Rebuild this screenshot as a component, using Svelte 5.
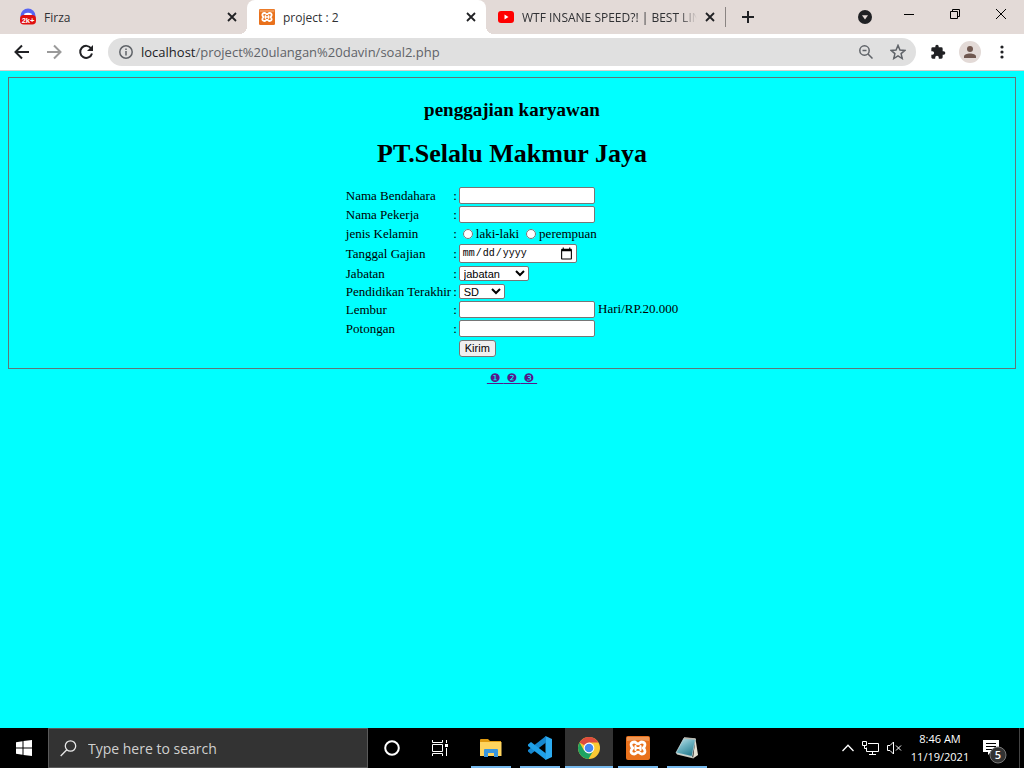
<script>
  let gender = $state('');
  const marks = ['❶', '❷', '❸'];
</script>

{#snippet cross()}
  <svg width="10" height="10" viewBox="0 0 10 10"><path d="M1 1l8 8M9 1l-8 8" stroke="#202124" stroke-width="1.8" /></svg>
{/snippet}

{#snippet xampp(size)}
  <svg width={size} height={size} viewBox="0 0 24 24">
    <rect width="24" height="24" rx="2" fill="#e9711c" />
    <path d="M1 1h22v4q-11-2-22 0z" fill="#f7b27c" opacity=".6" />
    <path d="M8.200 6c-2.600 0-3.600 1.800-3 3.600.3 1 .8 1.600 1.500 2.400-.7.8-1.200 1.400-1.500 2.400-.6 1.800.4 3.600 3 3.600 2 0 2-1.800 3.800-1.800s1.800 1.800 3.800 1.800c2.600 0 3.600-1.800 3-3.600-.3-1-.8-1.600-1.500-2.400.7-.8 1.200-1.400 1.500-2.400.6-1.800-.4-3.600-3-3.600-2 0-2 1.800-3.800 1.800s-1.800-1.800-3.800-1.800z" fill="#e9711c" stroke="#fff" stroke-width="2.800" />
    <path d="M9.500 10v4M14.500 10v4M9.500 12h5" stroke="#fff" stroke-width="2.200" stroke-linecap="round" />
  </svg>
{/snippet}

<div class="screen">
  <header class="tabs">
    <div class="tab first">
      <svg class="fav" width="16" height="18" viewBox="0 0 17 18">
        <circle cx="8.500" cy="8" r="8" fill="#5865f2" />
        <path d="M4.500 5.500q4-2 8 0v3h-8z" fill="#fff" />
        <rect x="0" y="7" width="17" height="10" rx="4" fill="#e01010" />
        <text x="8.500" y="15" text-anchor="middle" font-family="Liberation Sans, sans-serif" font-size="8" font-weight="700" fill="#fff">2k+</text>
      </svg>
      <span class="title">Firza</span>
      <button aria-label="Close Firza">{@render cross()}</button>
    </div>
    <div class="tab active">
      <span class="fav">{@render xampp(16)}</span>
      <span class="title">project : 2</span>
      <button aria-label="Close project">{@render cross()}</button>
    </div>
    <div class="tab">
      <svg class="fav" width="16" height="12" viewBox="0 0 16 12"><rect width="16" height="12" rx="3" fill="#f00" /><path d="M6.500 3.500v5l4-2.500z" fill="#fff" /></svg>
      <span class="title faded">WTF INSANE SPEED?! | BEST LING</span>
      <button aria-label="Close video">{@render cross()}</button>
    </div>
    <span class="divider"></span>
    <button class="plus" aria-label="New tab"><svg width="12" height="12" viewBox="0 0 12 12"><path d="M6 0v12M0 6h12" stroke="#202124" stroke-width="2" /></svg></button>
    <button class="down" aria-label="Search tabs"><svg width="14" height="14" viewBox="0 0 14 14"><circle cx="7" cy="7" r="7" fill="#202124" /><path d="M4 5.200h6L7 9.500z" fill="#e3dad7" /></svg></button>
    <div class="window">
      <button aria-label="Minimize"><svg width="12" height="12" viewBox="0 0 12 12"><path d="M1 6.500h10" stroke="#000" /></svg></button>
      <button aria-label="Restore"><svg width="12" height="12" viewBox="0 0 12 12" fill="none" stroke="#000"><path d="M1.500 3.500h7v7h-7zM3.500 3.500v-2h7v7h-2" /></svg></button>
      <button aria-label="Close"><svg width="12" height="12" viewBox="0 0 12 12"><path d="M1 1l10 10M11 1L1 11" stroke="#000" /></svg></button>
    </div>
  </header>

  <nav class="toolbar">
    <button aria-label="Back"><svg width="16" height="16" viewBox="0 0 16 16" fill="none" stroke="#202124" stroke-width="2"><path d="M15 8H2M8 1.500L1.500 8 8 14.500" /></svg></button>
    <button aria-label="Forward"><svg width="16" height="16" viewBox="0 0 16 16" fill="none" stroke="#9a9a9a" stroke-width="2"><path d="M1 8h13M8 1.500L14.500 8 8 14.500" /></svg></button>
    <button aria-label="Reload"><svg width="16" height="16" viewBox="0 0 16 16"><path d="M13.200 4.500A6 6 0 1 0 14 9.500" fill="none" stroke="#202124" stroke-width="2" /><path d="M15 1v6H9z" fill="#202124" /></svg></button>
    <div class="address">
      <svg width="14" height="14" viewBox="0 0 14 14" fill="none" stroke="#5f6368" stroke-width="1.500"><circle cx="7" cy="7" r="6.200" /><path d="M7 6v4.500M7 3.500v1.600" /></svg>
      <span class="url"><b>localhost</b>/project%20ulangan%20davin/soal2.php</span>
      <button aria-label="Zoom"><svg width="14" height="14" viewBox="0 0 14 14" fill="none" stroke="#5f6368" stroke-width="1.500"><circle cx="5.500" cy="5.500" r="4.700" /><path d="M9 9l4.500 4.500M3.500 5.500h4" /></svg></button>
      <button aria-label="Bookmark"><svg width="16" height="16" viewBox="0 0 14 14" fill="none" stroke="#5f6368" stroke-width="1.300"><path d="M7 1.200l1.700 4 4.300.4-3.300 2.800 1 4.300L7 10.400l-3.700 2.300 1-4.300L1 5.600l4.300-.4z" /></svg></button>
    </div>
    <button aria-label="Extensions"><svg width="16" height="16" viewBox="0 0 24 24" fill="#202124"><path d="M20.500 11H19V7a2 2 0 0 0-2-2h-4V3.500a2.500 2.500 0 0 0-5 0V5H4a2 2 0 0 0-2 2v3.800h1.500a2.700 2.700 0 0 1 0 5.400H2V20c0 1.100.9 2 2 2h3.800v-1.500a2.700 2.700 0 0 1 5.400 0V22H17a2 2 0 0 0 2-2v-4h1.500a2.500 2.500 0 0 0 0-5z" /></svg></button>
    <button aria-label="Profile"><svg width="22" height="22" viewBox="0 0 22 22"><circle cx="11" cy="11" r="11" fill="#e3dad7" /><circle cx="11" cy="8" r="3" fill="#705850" /><path d="M5 17v-1.500C5 13.500 8 12.500 11 12.500s6 1 6 3V17z" fill="#705850" /></svg></button>
    <button aria-label="Menu"><svg width="4" height="14" viewBox="0 0 4 14" fill="#202124"><circle cx="2" cy="2" r="1.600" /><circle cx="2" cy="7" r="1.600" /><circle cx="2" cy="12" r="1.600" /></svg></button>
  </nav>

  <main>
    <form onsubmit={(e) => e.preventDefault()}>
      <h3>penggajian karyawan</h3>
      <h1>PT.Selalu Makmur Jaya</h1>
      <table>
        <tbody>
          <tr class="lead"><td><label for="bendahara">Nama Bendahara</label></td><td>:</td><td><input id="bendahara" type="text" /></td></tr>
          <tr><td><label for="pekerja">Nama Pekerja</label></td><td>:</td><td><input id="pekerja" type="text" /></td></tr>
          <tr>
            <td>jenis Kelamin</td><td>:</td>
            <td><div class="radios">
              <label><input type="radio" name="gender" value="laki-laki" bind:group={gender} />laki-laki</label>
              <label><input type="radio" name="gender" value="perempuan" bind:group={gender} />perempuan</label>
            </div></td>
          </tr>
          <tr class="tall"><td><label for="tanggal">Tanggal Gajian</label></td><td>:</td><td><input id="tanggal" type="date" /></td></tr>
          <tr class="short"><td><label for="jabatan">Jabatan</label></td><td>:</td><td><select id="jabatan" class="wide"><option>jabatan</option></select></td></tr>
          <tr class="short"><td><label for="pendidikan">Pendidikan Terakhir</label></td><td>:</td><td><select id="pendidikan"><option>SD</option></select></td></tr>
          <tr><td><label for="lembur">Lembur</label></td><td>:</td><td><input id="lembur" type="text" /> Hari/RP.20.000</td></tr>
          <tr><td><label for="potongan">Potongan</label></td><td>:</td><td><input id="potongan" type="text" /></td></tr>
          <tr class="tall"><td></td><td></td><td><button class="send">Kirim</button></td></tr>
        </tbody>
      </table>
    </form>
    <div class="pages">
      {#each marks as mark, i}<a href={'#soal' + (i + 1)}>&nbsp;{mark}&nbsp;</a>{/each}
    </div>
  </main>

  <footer>
    <button class="cell" aria-label="Start"><svg width="16" height="16" viewBox="0 0 16 16" fill="#fff"><path d="M0 2.200L6.500 1.300v6.200H0zM7.500 1.100L16 0v7.500H7.500zM0 8.500h6.500v6.200L0 13.800zM7.500 8.500H16V16l-8.500-1.100z" /></svg></button>
    <label class="search">
      <svg width="17" height="17" viewBox="0 0 17 17" fill="none" stroke="#e8e8e8" stroke-width="1.300"><circle cx="10.500" cy="6" r="5.200" /><path d="M6.800 9.700L.7 16" /></svg>
      <input type="text" placeholder="Type here to search" aria-label="Type here to search" />
    </label>
    <button class="cell" aria-label="Cortana"><svg width="16" height="16" viewBox="0 0 16 16"><circle cx="8" cy="8" r="6.800" fill="none" stroke="#fff" stroke-width="2" /></svg></button>
    <button class="cell" aria-label="Task view"><svg width="16" height="16" viewBox="0 0 16 16" fill="none" stroke="#fff"><path d="M.5 0v2.500h10V0M.5 16v-2.500h10V16M.5 4.500h10v7H.5zM14.500 0v3M14.500 8v8" /><path d="M13 4h3v3h-3z" fill="#fff" stroke="none" /></svg></button>
    <div class="apps">
      <button class="cell app" aria-label="File Explorer"><svg width="22" height="18" viewBox="0 0 22 18"><path d="M0 1q0-1 1-1h7l2 2h11v15H0z" fill="#e09a10" /><path d="M0 3h21.500v14H0z" fill="#ffd45e" /><path d="M4 18v-7q0-1 1-1h12q1 0 1 1v7h-4v-4H8v4z" fill="#3a96dd" /></svg></button>
      <button class="cell app" aria-label="Visual Studio Code"><svg width="24" height="24" viewBox="0 0 24 24"><path d="M17.500 0L24 3v18l-6.500 3z" fill="#2cabf1" /><path d="M18 0v6.500L3 18l-3-2.500V14z" fill="#1687cf" /><path d="M18 24v-6.500L3 6 0 8.500V10z" fill="#1fa0e8" /></svg></button>
      <button class="cell app current" aria-label="Chrome"><svg width="24" height="24" viewBox="0 0 24 24"><circle cx="12" cy="12" r="11" fill="#fbc934" /><path d="M12 12L2.500 6.500A11 11 0 0 1 21.500 6.500H12z" fill="#dd4b3e" /><path d="M2.500 6.500A11 11 0 0 0 11.500 23L16.500 14.500 12 12 7 14.500z" fill="#1da362" /><circle cx="12" cy="12" r="5.400" fill="#fff" /><circle cx="12" cy="12" r="4.300" fill="#4587f3" /></svg></button>
      <button class="cell app" aria-label="XAMPP">{@render xampp(24)}</button>
      <button class="cell app" aria-label="Notepad">
        <svg width="24" height="24" viewBox="0 0 24 24">
          <defs><linearGradient id="pad" x1="0" y1="0" x2=".6" y2="1"><stop offset="0" stop-color="#cfeaee" /><stop offset=".5" stop-color="#6fb4c2" /><stop offset="1" stop-color="#2b7f92" /></linearGradient></defs>
          <path d="M20.500 3L23 19l-5 3.500z" fill="#e4e0d2" />
          <path d="M1 16.500L17 20l1.500 2.500L2 18.500z" fill="#c9c9bf" />
          <path d="M9 2l11.500 1-3.500 17.500L1 16.800z" fill="url(#pad)" stroke="#d9e6e6" stroke-width=".7" />
          <path d="M9 2l11.500 1" stroke="#b9b9b0" stroke-width="1.600" />
        </svg>
      </button>
    </div>
    <div class="tray">
      <svg width="12" height="8" viewBox="0 0 12 8" fill="none" stroke="#fff" stroke-width="1.300"><path d="M.5 7L6 1.200 11.500 7" /></svg>
      <svg width="17" height="14" viewBox="0 0 17 14" fill="none" stroke="#fff"><path d="M6 2.500h10.500v8H4.500V6.500M.5.500h4v4h-4zM2.500 4.500v3H5M10.500 10.500v3M7 13.500h7" /></svg>
      <svg width="15" height="14" viewBox="0 0 15 14" fill="none" stroke="#fff"><path d="M.5 4.500H3L6.500 1v12L3 9.500H.5zM9 4.500l5 5M14 4.500l-5 5" /></svg>
      <div class="clock"><span>8:46 AM</span><span>11/19/2021</span></div>
      <svg class="note" width="26" height="26" viewBox="0 0 26 26"><path d="M1 2h16v12H9l-3 3v-3H1z" fill="#fff" /><path d="M4 5.500h10M4 8.500h10M4 11.500h6" stroke="#000" /><circle cx="16" cy="17" r="8" fill="#333" stroke="#777" /><text x="16" y="21" text-anchor="middle" font-family="Open Sans, sans-serif" font-size="11" font-weight="600" fill="#fff">5</text></svg>
    </div>
  </footer>
</div>

<style>
  .screen { min-height: 100vh; display: flex; flex-direction: column; font-family: "Open Sans", "Noto Sans", sans-serif; }
  button { font: inherit; }
  svg { display: block; flex: none; }
  .tabs button, .toolbar button, .cell { border: 0; background: none; padding: 0; display: flex; align-items: center; justify-content: center; }

  .tabs { height: 34px; background: #e3dad7; display: flex; align-items: center; padding-left: 8px; }
  .tab { flex: 0 1 239px; box-sizing: border-box; min-width: 0; height: 34px; display: flex; align-items: center; padding: 0 10px 0 12px; gap: 8px; font-size: 12px; color: #303134; }
  .tab.active { position: relative; background: #fff; border-radius: 8px 8px 0 0; }
  .tab.active::before, .tab.active::after { content: ""; position: absolute; bottom: 0; width: 8px; height: 8px; }
  .tab.active::before { left: -8px; background: radial-gradient(circle at 0 0, transparent 8px, #fff 8px); }
  .tab.active::after { right: -8px; background: radial-gradient(circle at 100% 0, transparent 8px, #fff 8px); }
  .title { flex: 1; white-space: nowrap; overflow: hidden; }
  .faded { mask-image: linear-gradient(to right, #000 90%, transparent); }
  .divider { width: 1px; height: 20px; background: #8a8482; }
  .tabs .plus { margin-left: 16px; }
  .tabs .down { margin-left: auto; }
  .window { display: flex; margin-left: 14px; padding-bottom: 6px; }
  .window button { width: 46px; height: 28px; }

  .toolbar { height: 36px; background: #fff; border-bottom: 1px solid #d5cfcd; display: flex; align-items: center; padding: 0 6px; }
  .toolbar > button { width: 32px; height: 28px; }
  .address { flex: 1; height: 28px; margin: 0 6px; padding: 0 6px 0 11px; border-radius: 14px; background: #e0e0e0; display: flex; align-items: center; gap: 8px; color: #5f6368; font-size: 13px; }
  .address button { width: 24px; height: 24px; }
  .url { flex: 1; white-space: nowrap; overflow: hidden; }
  .url b { font-weight: 400; color: #202124; }

  main { flex: 1; background: #0ff; padding: 6px 8px; font-family: "Liberation Serif", serif; font-size: 13px; line-height: 15px; color: #000; }
  form { border: 1px solid #5f7878; padding: 0 0 9px; display: flex; flex-direction: column; align-items: center; }
  h3 { margin: 21px 0 0; font-size: 19px; line-height: 22px; }
  h1 { margin: 18px 0 16px; font-size: 26px; line-height: 30px; }
  table { border-collapse: collapse; margin-left: 2px; }
  tr { height: 19px; }
  tr.lead { height: 20px; }
  tr.tall { height: 21px; }
  tr.short { height: 18px; }
  td { padding: 0 2px 0 0; vertical-align: middle; white-space: nowrap; }
  td input, td select, td .send { display: inline-block; box-sizing: border-box; margin: 0; vertical-align: middle; border: 1px solid #767676; border-radius: 2px; background: #fff; font: 11px "Liberation Sans", sans-serif; color: #000; }
  td input[type="text"] { width: 136px; height: 17px; padding: 1px; }
  td input[type="date"] { width: 118px; height: 19px; padding: 0 3px 0 2px; font: 10px "Liberation Mono", monospace; }
  td input::-webkit-calendar-picker-indicator { width: 13px; height: 13px; padding: 0; background-size: 13px 13px; }
  td select { width: 46px; height: 15px; padding: 0; }
  td select.wide { width: 70px; }
  td .send { width: 37px; height: 17px; padding: 0; background: #efefef; line-height: 15px; border-radius: 3px; }
  .radios { display: flex; gap: 7px; padding-left: 4px; }
  .radios label { display: flex; align-items: center; gap: 3px; }
  .radios input { width: 10px; height: 10px; }
  .pages { text-align: center; line-height: 18px; }
  .pages a { color: #551a8b; font-size: 12px; font-family: "Liberation Serif", "DejaVu Sans", serif; }

  footer { height: 40px; background: #000; color: #fff; display: flex; align-items: center; }
  .cell { width: 48px; height: 40px; box-sizing: border-box; flex: none; }
  .search { flex: 0 1 320px; box-sizing: border-box; min-width: 0; height: 40px; background: #333; border: 1px solid #5a5a5a; display: flex; align-items: center; gap: 11px; padding: 0 11px; }
  .search input { flex: 1; min-width: 0; border: 0; padding: 0; outline: 0; background: none; color: #fff; font: 14px "Open Sans", sans-serif; }
  .search input::placeholder { color: #d0d0d0; opacity: 1; }
  .apps { display: flex; gap: 1px; margin-left: 3px; }
  .cell.app { background: linear-gradient(#76b9ed, #76b9ed) center bottom / 40px 2px no-repeat; }
  .cell.app.current { background-color: #333; background-size: 48px 2px; }
  .tray { margin-left: auto; height: 40px; display: flex; align-items: center; gap: 8px; padding-right: 11px; border-right: 1px solid #444; margin-right: 4px; }
  .clock { width: 60px; display: flex; flex-direction: column; align-items: center; font-size: 11px; line-height: 18px; white-space: nowrap; }
  .note { margin: 6px 0 0 4px; }
</style>
